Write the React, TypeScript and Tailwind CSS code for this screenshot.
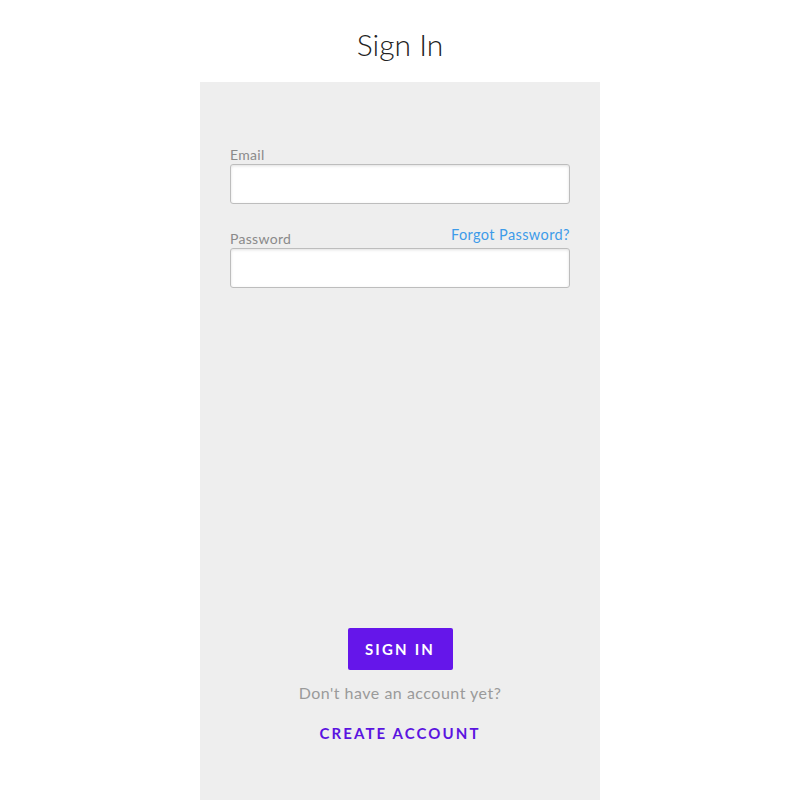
import React from 'react';

const font = { fontFamily: 'Lato, "Noto Sans", sans-serif' };

function Field({ label, type, extra }: { label: string; type: string; extra?: React.ReactNode }) {
  return (
    <div className="flex flex-col">
      <div className="flex items-end justify-between h-[18px] mb-[1px]">
        <label className="text-[14px] leading-[16px] text-[#8a8a8a] tracking-[0.3px]">{label}</label>
        {extra}
      </div>
      <input
        type={type}
        className="h-[40px] w-full rounded-[3px] border border-[#bdbdbd] bg-white shadow-[inset_0_1px_3px_rgba(0,0,0,0.12)] outline-none"
      />
    </div>
  );
}

export default function App() {
  return (
    <div className="min-h-[800px] w-[800px] bg-white flex flex-col items-center" style={font}>
      <h1 className="h-[82px] pt-[27px] text-[30px] leading-[34px] font-light text-[#222]">Sign In</h1>

      <div className="w-[400px] h-[718px] bg-[#eeeeee] flex flex-col px-[30px] pt-[63px] pb-[58px]">
        <div className="flex flex-col gap-[25px]">
          <Field label="Email" type="email" />
          <Field
            label="Password"
            type="password"
            extra={
              <a href="#" className="text-[14.5px] leading-[16px] text-[#3d9be9] tracking-[0.4px] -translate-y-[4px]">
                Forgot Password?
              </a>
            }
          />
        </div>

        <div className="flex-1" />

        <div className="flex flex-col items-center">
          <button className="w-[105px] h-[42px] rounded-[2px] bg-[#6516ea] text-white text-[15px] font-bold tracking-[2.2px]">
            SIGN IN
          </button>
          <p className="mt-[14px] text-[16px] leading-[18px] text-[#9a9a9a] tracking-[0.5px]">Don't have an account yet?</p>
          <a href="#" className="mt-[22px] text-[15px] leading-[18px] font-bold tracking-[2.1px] text-[#5b14e0]">
            CREATE ACCOUNT
          </a>
        </div>
      </div>
    </div>
  );
}
